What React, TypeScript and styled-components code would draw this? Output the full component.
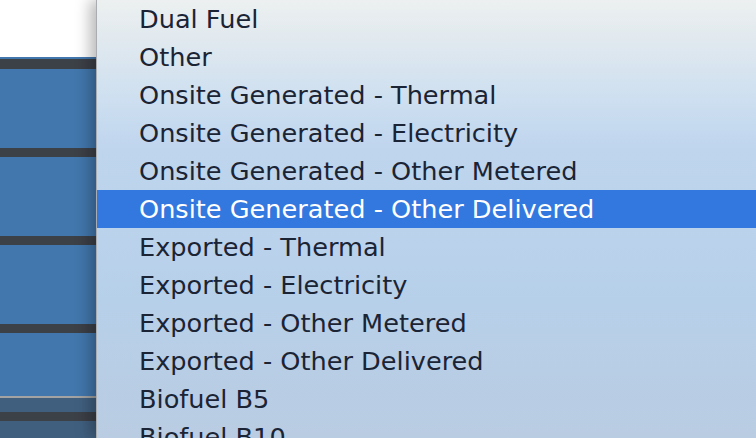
import React from 'react';
import styled, { createGlobalStyle } from 'styled-components';

const GlobalStyle = createGlobalStyle`
  html, body {
    margin: 0;
    padding: 0;
    overflow: hidden;
  }
  body {
    font-family: "DejaVu Sans", "Liberation Sans", sans-serif;
  }
`;

const Screen = styled.div`
  display: flex;
  width: 756px;
  height: 438px;
  overflow: hidden;
`;

const Sidebar = styled.div`
  width: 96px;
  flex: none;
  display: flex;
  flex-direction: column;
`;

type BandProps = { $h: number; $kind: 'white' | 'blue' | 'dark' | 'rule' | 'slate' | 'line' };

const bandColors: Record<BandProps['$kind'], string> = {
  white: '#ffffff',
  blue: '#4277ad',
  dark: '#3c4047',
  rule: '#a3a3a3',
  slate: '#405f7f',
  line: '#4277ad',
};

const Band = styled.div<BandProps>`
  height: ${({ $h }) => $h}px;
  flex: none;
  background: ${({ $kind }) => bandColors[$kind]};
`;

const Menu = styled.div`
  flex: 1;
  position: relative;
  border-left: 1px solid #a9acb0;
  box-shadow: -6px 0 14px rgba(0, 0, 0, 0.28);
  background: linear-gradient(
    to bottom,
    #ecf0f0 0px,
    #e1e9ef 40px,
    #cddff0 100px,
    #bfd5ee 150px,
    #b7d0e9 300px,
    #b9cce2 438px
  );
  display: flex;
  flex-direction: column;
`;

const Item = styled.div<{ $selected?: boolean }>`
  height: 38px;
  flex: none;
  display: flex;
  align-items: center;
  padding-left: 42px;
  font-size: 25.6px;
  white-space: nowrap;
  color: ${({ $selected }) => ($selected ? '#ffffff' : '#1b2434')};
  background: ${({ $selected }) => ($selected ? '#3278df' : 'transparent')};
`;

const items = [
  'Dual Fuel',
  'Other',
  'Onsite Generated - Thermal',
  'Onsite Generated - Electricity',
  'Onsite Generated - Other Metered',
  'Onsite Generated - Other Delivered',
  'Exported - Thermal',
  'Exported - Electricity',
  'Exported - Other Metered',
  'Exported - Other Delivered',
  'Biofuel B5',
  'Biofuel B10',
];

const bands: BandProps[] = [
  { $h: 57, $kind: 'white' },
  { $h: 2, $kind: 'line' },
  { $h: 10, $kind: 'dark' },
  { $h: 79, $kind: 'blue' },
  { $h: 9, $kind: 'dark' },
  { $h: 79, $kind: 'blue' },
  { $h: 9, $kind: 'dark' },
  { $h: 79, $kind: 'blue' },
  { $h: 9, $kind: 'dark' },
  { $h: 63, $kind: 'blue' },
  { $h: 2, $kind: 'rule' },
  { $h: 14, $kind: 'slate' },
  { $h: 9, $kind: 'dark' },
  { $h: 30, $kind: 'slate' },
];

export default function App() {
  return (
    <>
      <GlobalStyle />
      <Screen>
        <Sidebar>
          {bands.map((b, i) => (
            <Band key={i} $h={b.$h} $kind={b.$kind} />
          ))}
        </Sidebar>
        <Menu>
          {items.map((label) => (
            <Item key={label} $selected={label === 'Onsite Generated - Other Delivered'}>
              {label}
            </Item>
          ))}
        </Menu>
      </Screen>
    </>
  );
}
